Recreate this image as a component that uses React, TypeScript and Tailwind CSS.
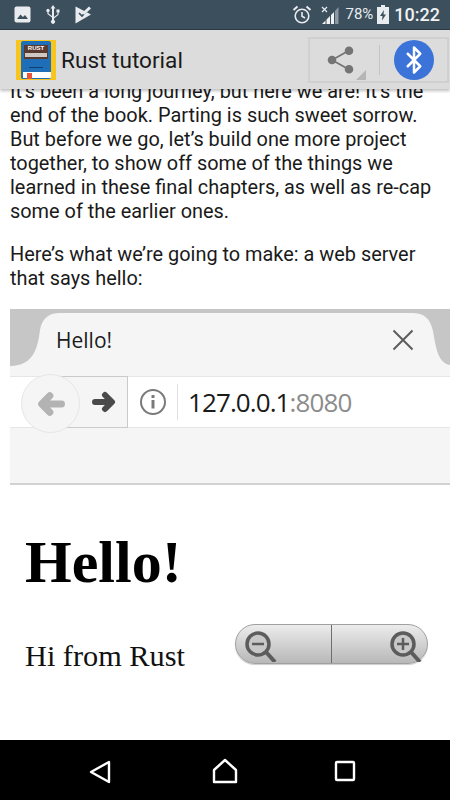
import { Bluetooth } from "lucide-react";

function StatusBar() {
    return (
        <div className="h-[30px] bg-[#3c4f5d] border-b border-[#2b3a45] flex items-center justify-between pl-[14px] pr-[10px]">
            <div className="flex items-center gap-[14px]">
                <svg width="17" height="17" viewBox="0 0 17 17">
                    <rect x="0.5" y="0.5" width="16" height="16" rx="2" fill="#e8ecef" />
                    <path d="M3 13 L6.5 8.5 L9 11 L11 9 L14 13 Z" fill="#3c4f5d" />
                </svg>
                <svg width="16" height="19" viewBox="0 0 16 19" fill="#e8ecef">
                    <path d="M8 0 L10.5 3.5 H9 V12 L12.5 9.2 V7.5 H11.5 V4.5 H14.5 V7.5 H13.6 V9.8 L9 13.5 V15 A2 2 0 1 1 7 15 V12.5 L2.4 9 V7 A1.6 1.6 0 1 1 3.6 7 V8.4 L7 11 V3.5 H5.5 Z" />
                </svg>
                <svg width="17" height="18" viewBox="0 0 17 18" fill="#e8ecef">
                    <path d="M0.5 0.5 L16 8.5 L0.5 17.5 Z" />
                    <path d="M4 7 L7 10 L14 2.5" fill="none" stroke="#3c4f5d" strokeWidth="1.6" />
                    <path d="M7.5 6.5 L14 0.5 L16 2.5 L9 9 Z" fill="#e8ecef" />
                </svg>
            </div>
            <div className="flex items-center">
                <svg width="20" height="20" viewBox="0 0 20 20" fill="none" stroke="#e8ecef" strokeWidth="1.6" className="mr-[9px]">
                    <circle cx="10" cy="11" r="6.8" />
                    <path d="M10 7 V11.3 L13 13" />
                    <path d="M1.5 5 L5.5 1.5 M18.5 5 L14.5 1.5" strokeWidth="2" />
                </svg>
                <svg width="18" height="18" viewBox="0 0 18 18" className="mr-[6px]">
                    <path d="M1 18 L4.5 14.5 V18 Z M5.5 18 V13.5 L9 10 V18 Z M10 18 V9 L13 6 V18 Z" fill="#f0f2f4" />
                    <path d="M14 18 V5 L17.5 1 V18 Z" fill="#8b98a2" />
                    <path d="M1 1 L6 6 M6 1 L1 6" stroke="#e8ecef" strokeWidth="1.2" />
                </svg>
                <span className="text-[15px] text-[#e8ecef] mr-[4px] font-['Roboto',sans-serif]">78%</span>
                <svg width="12" height="19" viewBox="0 0 12 19" className="mr-[5px]">
                    <path d="M4 0 H8 V2 H12 V19 H0 V2 H4 Z" fill="#e8ecef" />
                    <path d="M7 5 L3 11 H5.5 L5 15.5 L9 9.5 H6.5 Z" fill="#3c4f5d" />
                </svg>
                <span className="text-[18px] font-medium text-[#f0f2f4] font-['Roboto',sans-serif]">10:22</span>
            </div>
        </div>
    );
}

function BookIcon() {
    return (
        <div className="w-10 h-10 bg-[#f7c51e] flex items-center justify-center shrink-0">
            <div className="relative w-[30px] h-[38px] bg-[#1f6fb8] rounded-[2px] overflow-hidden">
                <div className="mx-[3px] mt-[4px] h-[14px] bg-[#5a3a2e] flex flex-col items-center">
                    <span className="text-[6px] leading-[7px] font-bold text-white font-['Liberation_Sans',sans-serif]">RUST</span>
                    <div className="w-[22px] h-[4px] bg-[#cfc8c2] mt-[1px]" />
                </div>
                <div className="w-[14px] h-[1px] bg-[#123f70] mx-auto mt-[8px]" />
                <div className="absolute left-[2px] right-0 bottom-[1px] h-[6px] bg-white" />
                <div className="absolute left-[6px] bottom-0 w-[5px] h-[6px] bg-[#e8563a]" />
            </div>
        </div>
    );
}

function AppBar() {
    return (
        <div className="relative z-10 h-[59px] bg-[#dcdcdc] shadow-[0_2px_3px_rgba(0,0,0,0.25)] flex items-center pl-4 pr-[1px]">
            <BookIcon />
            <span className="ml-[5px] pt-[3px] text-[22.6px] text-[#1a1a1a] font-['Roboto',sans-serif]">Rust tutorial</span>
            <div className="ml-auto w-[141px] h-[46px] border-2 border-[#d0d0d0] flex items-center">
                <div className="relative w-[69px] h-full flex items-center pl-[17px]">
                    <svg width="28" height="28" viewBox="0 0 28 28" fill="#757575" stroke="#757575" strokeWidth="1.8">
                        <path d="M5 14 L22 4.5 M5 14 L22 23.5" fill="none" />
                        <circle cx="5" cy="14" r="3.4" />
                        <circle cx="22" cy="4.8" r="3.4" />
                        <circle cx="22" cy="23.2" r="3.4" />
                    </svg>
                    <div className="absolute right-[13px] bottom-[1px] w-0 h-0 border-l-[10px] border-l-transparent border-b-[10px] border-b-[#b5b5b5]" />
                </div>
                <div className="w-[1px] h-[30px] bg-[#c4c4c4]" />
                <div className="flex-1 flex items-center justify-center">
                    <div className="w-10 h-10 rounded-full bg-[#3b73d9] flex items-center justify-center">
                        <Bluetooth size={30} color="#ffffff" strokeWidth={2} />
                    </div>
                </div>
            </div>
        </div>
    );
}

function BrowserShot() {
    return (
        <div className="ml-[10px] font-['Liberation_Serif',serif]">
            <div className="h-[4px] bg-[#c6c6c6]" />
            <div className="relative h-[63px] bg-[#f5f5f5] flex items-center justify-between pb-[10px] pl-[46px] pr-[36px]">
                <svg width="50" height="53" viewBox="0 0 50 53" className="absolute left-0 top-0">
                    <path d="M0 0 H50 C38 0 32 6 30 17 C28 32 25 53 0 53 Z" fill="#c6c6c6" />
                </svg>
                <span className="relative top-[1px] text-[21px] text-[#1c1c1c] font-['Open_Sans',sans-serif]">Hello!</span>
                <svg width="22" height="22" viewBox="0 0 22 22" stroke="#5c5c5c" strokeWidth="2">
                    <path d="M1.5 1.5 L20.5 20.5 M20.5 1.5 L1.5 20.5" />
                </svg>
                <svg width="40" height="53" viewBox="0 0 40 53" className="absolute right-0 top-0">
                    <path d="M40 0 H2 C14 0 20 5 23 18 C26 35 28 50 40 52 Z" fill="#c6c6c6" />
                </svg>
            </div>
            <div className="relative h-[52px] bg-white border-y border-[#e6e6e6] flex items-center">
                <div className="ml-[50px] w-[68px] h-[52px] -my-px bg-[#f5f5f5] border border-[#cacaca] flex items-center justify-end pr-[11px]">
                    <svg width="24" height="24" viewBox="0 0 24 24" fill="none" stroke="#4a4a4a" strokeWidth="6" strokeLinecap="round" strokeLinejoin="round">
                        <path d="M3 12 H19 M13 5 L20 12 L13 19" />
                    </svg>
                </div>
                <div className="absolute left-[11px] top-[-3px] w-[59px] h-[59px] rounded-full bg-[#f5f5f5] border border-[#e6e6e6] flex items-center justify-center">
                    <svg width="28" height="28" viewBox="0 0 24 24" fill="none" stroke="#b3b3b3" strokeWidth="6" strokeLinecap="round" strokeLinejoin="round">
                        <path d="M21 12 H5 M11 5 L4 12 L11 19" />
                    </svg>
                </div>
                <svg width="28" height="28" viewBox="0 0 28 28" fill="none" stroke="#7a7a7a" strokeWidth="2" className="ml-[11px]">
                    <circle cx="14" cy="14" r="12" />
                    <path d="M14 12 V20.5" strokeWidth="3" />
                    <path d="M14 7 V10" strokeWidth="3" />
                </svg>
                <div className="w-[1px] h-[36px] bg-[#e0e0e0] ml-[10px]" />
                <span className="ml-[10px] text-[26px] leading-none tracking-[-0.9px] text-[#1a1a1a] font-['Open_Sans',sans-serif]">
                    127.0.0.1<span className="text-[#8c8c8c]">:8080</span>
                </span>
            </div>
            <div className="h-[57px] bg-[#f5f5f5] border-b-2 border-[#d2d2d2]" />
            <div className="relative h-[193px] pl-[15px]">
                <h1 className="pt-[43px] text-[60px] leading-[69px] font-bold text-black">Hello!</h1>
                <p className="mt-[42px] text-[30.3px] leading-[34px] text-[#111111]">Hi from Rust</p>
            </div>
        </div>
    );
}

function ZoomControl() {
    return (
        <div className="absolute left-[235px] top-[624px] w-[193px] h-[40px] rounded-full border border-[#a0a0a0] bg-gradient-to-b from-[#ececec] to-[#b8b8b8] shadow-[0_1px_1px_rgba(0,0,0,0.2)] flex items-center">
            <div className="w-[95px] shrink-0 h-full flex items-center pl-[6px]">
                <svg width="38" height="36" viewBox="0 0 38 36" fill="none" stroke="#5c5c5c">
                    <circle cx="16" cy="18" r="11" strokeWidth="3.5" fill="#c8c8c8" />
                    <path d="M24 26 L33 36" strokeWidth="4" />
                    <path d="M10 18 H22" strokeWidth="2.5" />
                </svg>
            </div>
            <div className="w-[1px] h-full bg-[#6e6e6e]" />
            <div className="flex-1 h-full flex items-center justify-end pr-[4px]">
                <svg width="36" height="36" viewBox="0 0 36 36" fill="none" stroke="#5c5c5c">
                    <circle cx="16" cy="18" r="11" strokeWidth="3.5" fill="#c8c8c8" />
                    <path d="M24 26 L33 36" strokeWidth="4" />
                    <path d="M10 18 H22 M16 12 V24" strokeWidth="2.5" />
                </svg>
            </div>
        </div>
    );
}

function NavBar() {
    return (
        <div className="h-[60px] bg-black flex items-center pl-[89px]">
            <svg width="22" height="24" viewBox="0 0 22 24" fill="none" stroke="#ffffff" strokeWidth="2.4" strokeLinejoin="round" className="mt-[3px]">
                <path d="M20 2 V22 L2 12 Z" />
            </svg>
            <svg width="26" height="26" viewBox="0 0 26 26" fill="none" stroke="#ffffff" strokeWidth="2.4" strokeLinejoin="round" className="ml-[101px] mt-[1px]">
                <path d="M13 2 L24 12 V24 H2 V12 Z" />
            </svg>
            <svg width="22" height="22" viewBox="0 0 22 22" fill="none" stroke="#ffffff" strokeWidth="2.4" strokeLinejoin="round" className="ml-[96px] mt-[2px]">
                <rect x="2" y="2" width="18" height="18" rx="1" />
            </svg>
        </div>
    );
}

export default function App() {
    return (
        <div className="relative w-[450px] h-[800px] overflow-hidden bg-white flex flex-col">
            <StatusBar />
            <AppBar />
            <div className="relative flex-1 overflow-hidden">
                <div className="-mt-[9px] px-[10px] text-[19.9px] leading-[24px] text-[#1a1a1a] font-['Roboto',sans-serif]">
                    <p>It’s been a long journey, but here we are! It’s the end of the book. Parting is such sweet sorrow. But before we go, let’s build one more project together, to show off some of the things we learned in these final chapters, as well as re-cap some of the earlier ones.</p>
                    <p className="mt-[19px]">Here’s what we’re going to make: a web server that says hello:</p>
                </div>
                <div className="mt-[18px]">
                    <BrowserShot />
                </div>
            </div>
            <ZoomControl />
            <NavBar />
        </div>
    );
}
